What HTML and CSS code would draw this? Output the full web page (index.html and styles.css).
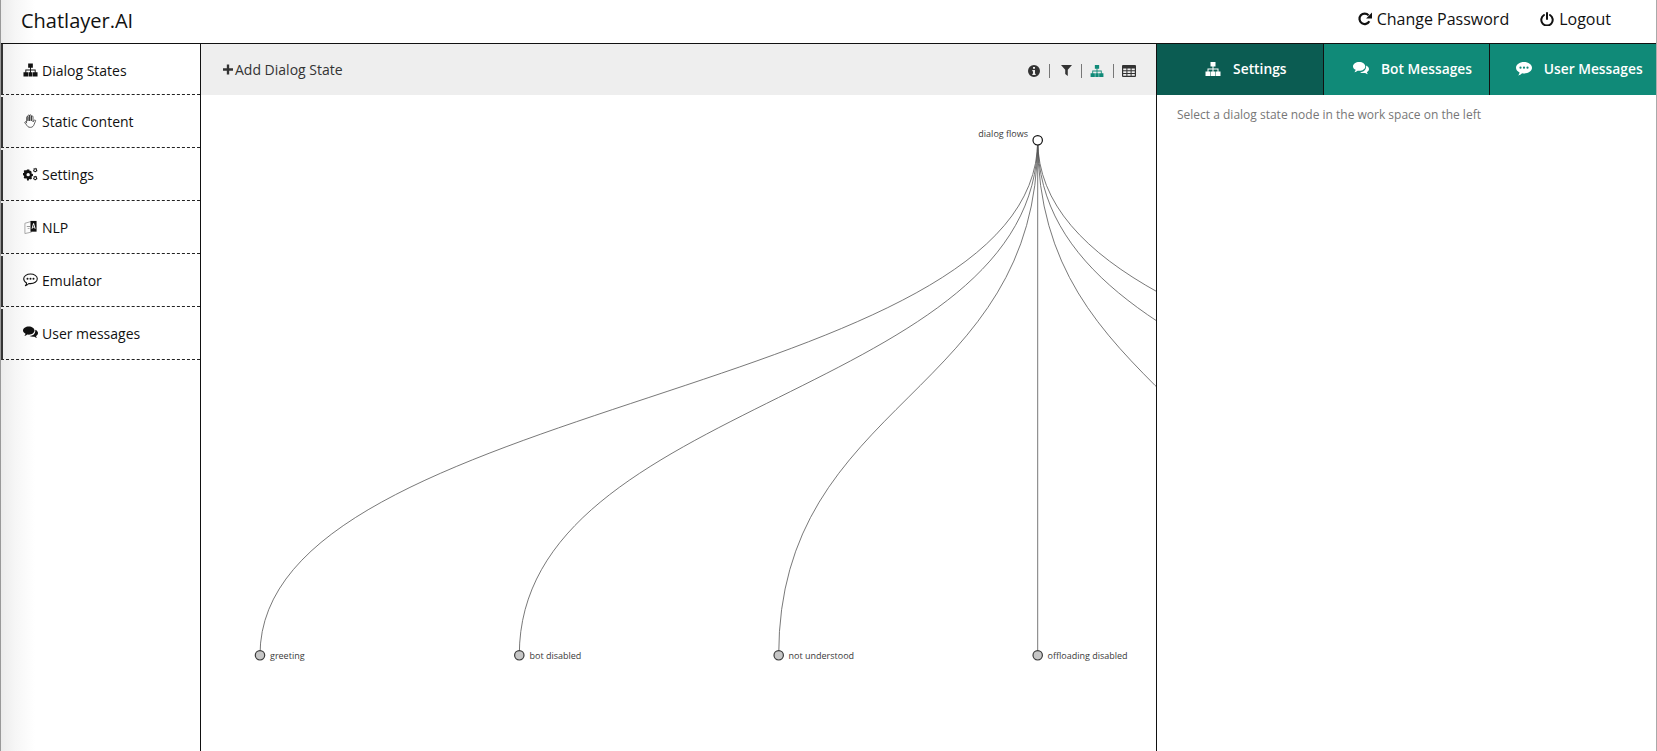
FILE: index.html
```html
<!DOCTYPE html>
<html lang="en">
<head>
<meta charset="utf-8">
<title>Chatlayer.AI</title>
<link rel="stylesheet" href="styles.css">
</head>
<body>
<svg class="defs" width="0" height="0" aria-hidden="true">
  <defs>
    <symbol id="i-sitemap" viewBox="0 0 16 14">
      <path d="M5.500 0h5v4.500h-2v2h5v3h2V14h-5V9.500h2v-2h-4v2H10V14H6V9.500h1.500v-2h-4v2h2V14h-5V9.500h2v-3h5v-2h-2z"/>
    </symbol>
    <symbol id="i-hand" viewBox="0 0 14 15">
      <path fill="none" stroke="currentColor" stroke-width=".7" stroke-linejoin="round" stroke-linecap="round" d="M2.800 8.500V3.500c0-1.100 1.500-1.100 1.500 0V7M4.300 7V2c0-1.300 1.800-1.300 1.800 0v5M6.100 7V1.800c0-1.200 1.800-1.200 1.800 0V7M7.900 7V3c0-1.200 1.800-1.200 1.800 0v5.500c.6-1 1.100-2 1.800-2.100.9-.1 1.100.7.800 1.300l-1.400 3.400c-.7 1.800-1.700 3.200-3.800 3.200H6.600c-1.900 0-3-1-3.800-2.600L1 9.600c-.5-1.100.8-1.900 1.500-.9L2.800 9.500"/>
    </symbol>
    <symbol id="i-cogs" viewBox="0 0 16 14">
      <path fill-rule="evenodd" d="M4.300 2.300h2.400l.3 1.300 1-.1 1.400 1.300-.6 1 .7.900 1.100.2v2.300l-1.200.3-.3.900.6 1-1.400 1.400-1-.5-.9.4-.3 1.200H4.300L4 11.800l-.9-.4-1 .6-1.400-1.400.6-1-.4-.9-1.100-.3V6.100l1.100-.3.4-.9-.6-1L2.100 2.600l1 .6.900-.4zM5.500 5.900a1.800 1.800 0 1 0 0 3.600 1.800 1.800 0 0 0 0-3.600z"/>
      <path fill-rule="evenodd" d="M13 0l.4 1 1-.2.700.8-.5.900.8.800-.4 1-1 .1-.5.800-1 0-.5-.9-1-.1-.3-1 .8-.8-.5-.9.800-.7 1 .2zM13 2a.9.9 0 1 0 0 1.800.9.9 0 0 0 0-1.800z"/>
      <path fill-rule="evenodd" d="M13 8.500l.4 1 1-.2.700.8-.5.900.8.800-.4 1-1 .1-.5.800-1 0-.5-.9-1-.1-.3-1 .8-.8-.5-.9.800-.7 1 .2zM13 10.500a.9.9 0 1 0 0 1.800.9.9 0 0 0 0-1.800z"/>
    </symbol>
    <symbol id="i-language" viewBox="0 0 14 15">
      <path fill="none" stroke="#999" stroke-width=".9" d="M1 3.500 8 1.500v11.500l-7 1.500z"/>
      <path fill="#999" d="M3 6.500h3.500v1H3zM4 8.500h2v1H4z"/>
      <path d="M7 1h6.500v11.500H7z"/>
      <path fill="#fff" d="M9.800 3.500h1l1.700 6h-1l-.4-1.400H9.500l-.4 1.400h-1zm.5 1.400-.6 2.300h1.200z"/>
    </symbol>
    <symbol id="i-comment-o" viewBox="0 0 15 14">
      <path fill="none" stroke="currentColor" stroke-width="1.100" stroke-linejoin="round" d="M7.500 1C11.100 1 14.300 3 14.300 5.800S11.100 10.600 7.500 10.600c-.6 0-1.200 0-1.700-.1-.9 1-2 1.800-3.400 2.200.7-.8 1.200-1.700 1.200-2.800C1.900 9 .7 7.500.7 5.800.7 3 3.900 1 7.500 1z"/>
      <circle cx="4.500" cy="5.800" r="1"/><circle cx="7.500" cy="5.800" r="1"/><circle cx="10.500" cy="5.800" r="1"/>
    </symbol>
    <symbol id="i-comments" viewBox="0 0 15 13">
      <path d="M5.800 0C9 0 11.500 1.800 11.500 4.100S9 8.200 5.800 8.200c-.5 0-1 0-1.500-.1-.9.700-1.900 1.200-3 1.400.6-.7 1-1.400 1.200-2.200C1 6.600 0 5.400 0 4.100 0 1.800 2.600 0 5.800 0z"/>
      <path d="M12.300 3.300c1.600.7 2.700 1.900 2.700 3.300 0 1.200-.8 2.300-2 3 .2.700.5 1.300 1 1.900-1-.2-1.900-.7-2.600-1.300-.5.100-1 .1-1.400.1-1.300 0-2.500-.3-3.500-.8 3.200.1 6.100-2 5.800-6.200z"/>
    </symbol>
    <symbol id="i-comment" viewBox="0 0 16 14">
      <path fill-rule="evenodd" d="M8 0c4.400 0 8 2.500 8 5.700s-3.600 5.700-8 5.700c-.7 0-1.300-.1-1.900-.2-1.100 1.100-2.400 1.900-4 2.300.7-.9 1.300-1.900 1.500-3.100C1.400 9.400 0 7.700 0 5.700 0 2.500 3.600 0 8 0zM4.500 4.600a1.100 1.100 0 1 0 0 2.200 1.100 1.100 0 0 0 0-2.200zM8 4.600a1.100 1.100 0 1 0 0 2.200 1.100 1.100 0 0 0 0-2.200zM11.500 4.600a1.100 1.100 0 1 0 0 2.200 1.100 1.100 0 0 0 0-2.200z"/>
    </symbol>
    <symbol id="i-info" viewBox="0 0 12 12">
      <path fill-rule="evenodd" d="M6 0a6 6 0 1 1 0 12A6 6 0 0 1 6 0zM5 2v1.800h2V2zM4.300 5v1.200H5v2.500h-.7V10h3.400V8.700H7V5z"/>
    </symbol>
    <symbol id="i-filter" viewBox="0 0 12 12">
      <path d="M0 0h12L7.400 5.300V12L4.600 9.800V5.300z"/>
    </symbol>
    <symbol id="i-table" viewBox="0 0 14 12">
      <path fill-rule="evenodd" d="M1 0h12a1 1 0 0 1 1 1v10a1 1 0 0 1-1 1H1a1 1 0 0 1-1-1V1a1 1 0 0 1 1-1zM1.200 3.500v1.800h3.200V3.500zM5.400 3.500v1.800h3.200V3.500zM9.600 3.500v1.800h3.200V3.500zM1.200 6.300v1.800h3.200V6.300zM5.400 6.300v1.800h3.200V6.300zM9.600 6.300v1.800h3.200V6.300zM1.200 9.100v1.700h3.200V9.100zM5.400 9.100v1.700h3.200V9.100zM9.600 9.100v1.700h3.200V9.100z"/>
    </symbol>
    <symbol id="i-plus" viewBox="0 0 11 11">
      <path d="M4.200 0h2.600v4.200H11v2.600H6.800V11H4.200V6.800H0V4.200h4.200z"/>
    </symbol>
    <symbol id="i-repeat" viewBox="0 0 14 14">
      <path fill="none" stroke="currentColor" stroke-width="2.200" d="M11.300 9.200A5.200 5.200 0 1 1 10.600 3.400"/>
      <path d="M14 .6V6.500H8.100z"/>
    </symbol>
    <symbol id="i-power" viewBox="0 0 14 14">
      <path fill="none" stroke="currentColor" stroke-width="2" stroke-linecap="round" d="M4 3A5.700 5.700 0 1 0 10 3M7 1v6"/>
    </symbol>
  </defs>
</svg>

<div class="page">
  <header class="topbar">
    <div class="brand">Chatlayer.AI</div>
    <nav class="account">
      <a class="account-link"><svg class="ico ico-14"><use href="#i-repeat"/></svg>Change Password</a>
      <a class="account-link"><svg class="ico ico-14"><use href="#i-power"/></svg>Logout</a>
    </nav>
  </header>

  <div class="workspace">
    <aside class="sidebar">
      <a class="side-item"><svg class="ico ico-side"><use href="#i-sitemap"/></svg>Dialog States</a>
      <a class="side-item"><svg class="ico ico-side"><use href="#i-hand"/></svg>Static Content</a>
      <a class="side-item"><svg class="ico ico-side"><use href="#i-cogs"/></svg>Settings</a>
      <a class="side-item"><svg class="ico ico-side"><use href="#i-language"/></svg>NLP</a>
      <a class="side-item"><svg class="ico ico-side"><use href="#i-comment-o"/></svg>Emulator</a>
      <a class="side-item"><svg class="ico ico-side"><use href="#i-comments"/></svg>User messages</a>
    </aside>

    <main class="canvas-panel">
      <div class="toolbar">
        <a class="add-state"><svg class="ico ico-plus"><use href="#i-plus"/></svg>Add Dialog State</a>
        <div class="view-tools">
          <svg class="ico ico-12 tool-icon"><use href="#i-info"/></svg>
          <span class="tool-sep"></span>
          <svg class="ico ico-filter tool-icon"><use href="#i-filter"/></svg>
          <span class="tool-sep"></span>
          <svg class="ico ico-tool tool-icon is-active"><use href="#i-sitemap"/></svg>
          <span class="tool-sep"></span>
          <svg class="ico ico-tool"><use href="#i-table"/></svg>
        </div>
      </div>
      <svg class="graph" viewBox="201 95 955 656" width="955" height="656">
        <g class="links">
          <path d="M1037.700 140C1037.700 397.500 260 397.500 260 655"/>
          <path d="M1037.700 140C1037.700 397.500 519.300 397.500 519.300 655"/>
          <path d="M1037.700 140C1037.700 397.500 778.700 397.500 778.700 655"/>
          <path d="M1037.700 140V655"/>
          <path d="M1037.700 140C1037.700 397.500 1296.700 397.500 1296.700 655"/>
          <path d="M1037.700 140C1037.700 397.500 1555.700 397.500 1555.700 655"/>
          <path d="M1037.700 140C1037.700 397.500 1814.700 397.500 1814.700 655"/>
        </g>
        <circle class="node node-root" cx="1037.700" cy="140.300" r="4.700"/>
        <text class="node-label" x="1028" y="137" text-anchor="end">dialog flows</text>
        <circle class="node" cx="260" cy="655.300" r="4.700"/>
        <text class="node-label" x="270" y="659">greeting</text>
        <circle class="node" cx="519.300" cy="655.300" r="4.700"/>
        <text class="node-label" x="529.500" y="659">bot disabled</text>
        <circle class="node" cx="778.700" cy="655.300" r="4.700"/>
        <text class="node-label" x="788.500" y="659">not understood</text>
        <circle class="node" cx="1037.700" cy="655.300" r="4.700"/>
        <text class="node-label" x="1047.500" y="659">offloading disabled</text>
      </svg>
    </main>

    <section class="detail-panel">
      <div class="tabs">
        <a class="tab is-current"><svg class="ico ico-tab"><use href="#i-sitemap"/></svg>Settings</a>
        <a class="tab"><svg class="ico ico-tab"><use href="#i-comments"/></svg>Bot Messages</a>
        <a class="tab"><svg class="ico ico-tab"><use href="#i-comment"/></svg>User Messages</a>
      </div>
      <p class="hint">Select a dialog state node in the work space on the left</p>
    </section>
  </div>
</div>
</body>
</html>
```

FILE: styles.css
```css
* { box-sizing: border-box; }

html, body {
  margin: 0;
  height: 100%;
  overflow: hidden;
}

body {
  font-family: "Open Sans", "Noto Sans", sans-serif;
  color: #111;
  background: #fff;
}

.defs { position: absolute; }

.ico {
  display: block;
  flex: none;
  fill: currentColor;
}
.ico-14 { width: 14px; height: 14px; }
.ico-12 { width: 12px; height: 12px; }
.ico-side { width: 15px; height: 14px; }
.ico-plus { width: 10px; height: 11px; margin-right: 2px; }
.ico-filter { width: 11px; height: 11px; margin-left: 3px; }
.ico-tool { width: 14px; height: 12px; }
.ico-tab { width: 16px; height: 14px; }

.page {
  display: flex;
  flex-direction: column;
  height: 751px;
  border-left: 1px solid #999;
  border-right: 1px solid #aaa;
  background: linear-gradient(to right, #ececec 0, #f6f6f6 14px, #fff 34px);
}

/* top bar */
.topbar {
  display: flex;
  align-items: center;
  justify-content: space-between;
  flex: none;
  height: 44px;
  padding: 0 45px 3px 20px;
  border-bottom: 1px solid #111;
}

.brand {
  font-size: 20px;
  line-height: 27px;
  color: #111;
}

.account {
  display: flex;
  gap: 31px;
  margin-bottom: 2px;
}

.account-link {
  display: flex;
  align-items: center;
  gap: 5px;
  font-size: 16px;
  line-height: 22px;
}

/* three columns */
.workspace {
  display: flex;
  flex: 1;
  min-height: 0;
}

.sidebar {
  flex: none;
  width: 200px;
  border-right: 1px solid #111;
}

.side-item {
  display: flex;
  align-items: center;
  gap: 4px;
  height: 51px;
  margin-bottom: 2px;
  padding: 0 0 2px 20px;
  border-left: 2px solid #333;
  border-bottom: 1px dashed #222;
  font-size: 14px;
  color: #111;
}

.side-item:first-child { padding-top: 4px; }

/* canvas */
.canvas-panel {
  display: flex;
  flex-direction: column;
  flex: none;
  width: 956px;
  background: #fff;
  border-right: 1px solid #111;
  overflow: hidden;
}

.toolbar {
  display: flex;
  align-items: center;
  justify-content: space-between;
  flex: none;
  height: 51px;
  padding: 0 20px 1px 22px;
  background: #eee;
}

.add-state {
  display: flex;
  align-items: center;
  font-size: 14px;
  color: #333;
}

.view-tools {
  display: flex;
  align-items: center;
  gap: 8px;
  padding-top: 3px;
  color: #333;
}

.tool-icon { margin-right: 1px; }

.tool-sep {
  width: 1px;
  height: 14px;
  background: #777;
}

.is-active { color: #108a78; }

.graph {
  display: block;
  flex: none;
}

.links path {
  fill: none;
  stroke: #555;
  stroke-width: .8;
}

.node {
  fill: #c6c6c6;
  stroke: #3a3a3a;
  stroke-width: 1.2;
}

.node-root { fill: #fff; stroke: #111; }

.node-label {
  font-size: 9px;
  fill: #3a3a3a;
}

/* detail panel */
.detail-panel {
  flex: 1;
  min-width: 0;
  background: #fff;
}

.tabs {
  display: flex;
  height: 51px;
}

.tab {
  display: flex;
  flex: 1;
  align-items: center;
  justify-content: center;
  gap: 12px;
  padding: 0 0 2px 12px;
  background: #108a78;
  border-right: 1px solid #111;
  color: #fff;
  font-size: 13.800px;
  font-weight: 600;
}

.tab:last-child { border-right: 0; }
.is-current { background: #0b5c52; }

.hint {
  margin: 0;
  padding: 11px 20px;
  font-size: 12px;
  line-height: 17px;
  color: #777;
}
```
